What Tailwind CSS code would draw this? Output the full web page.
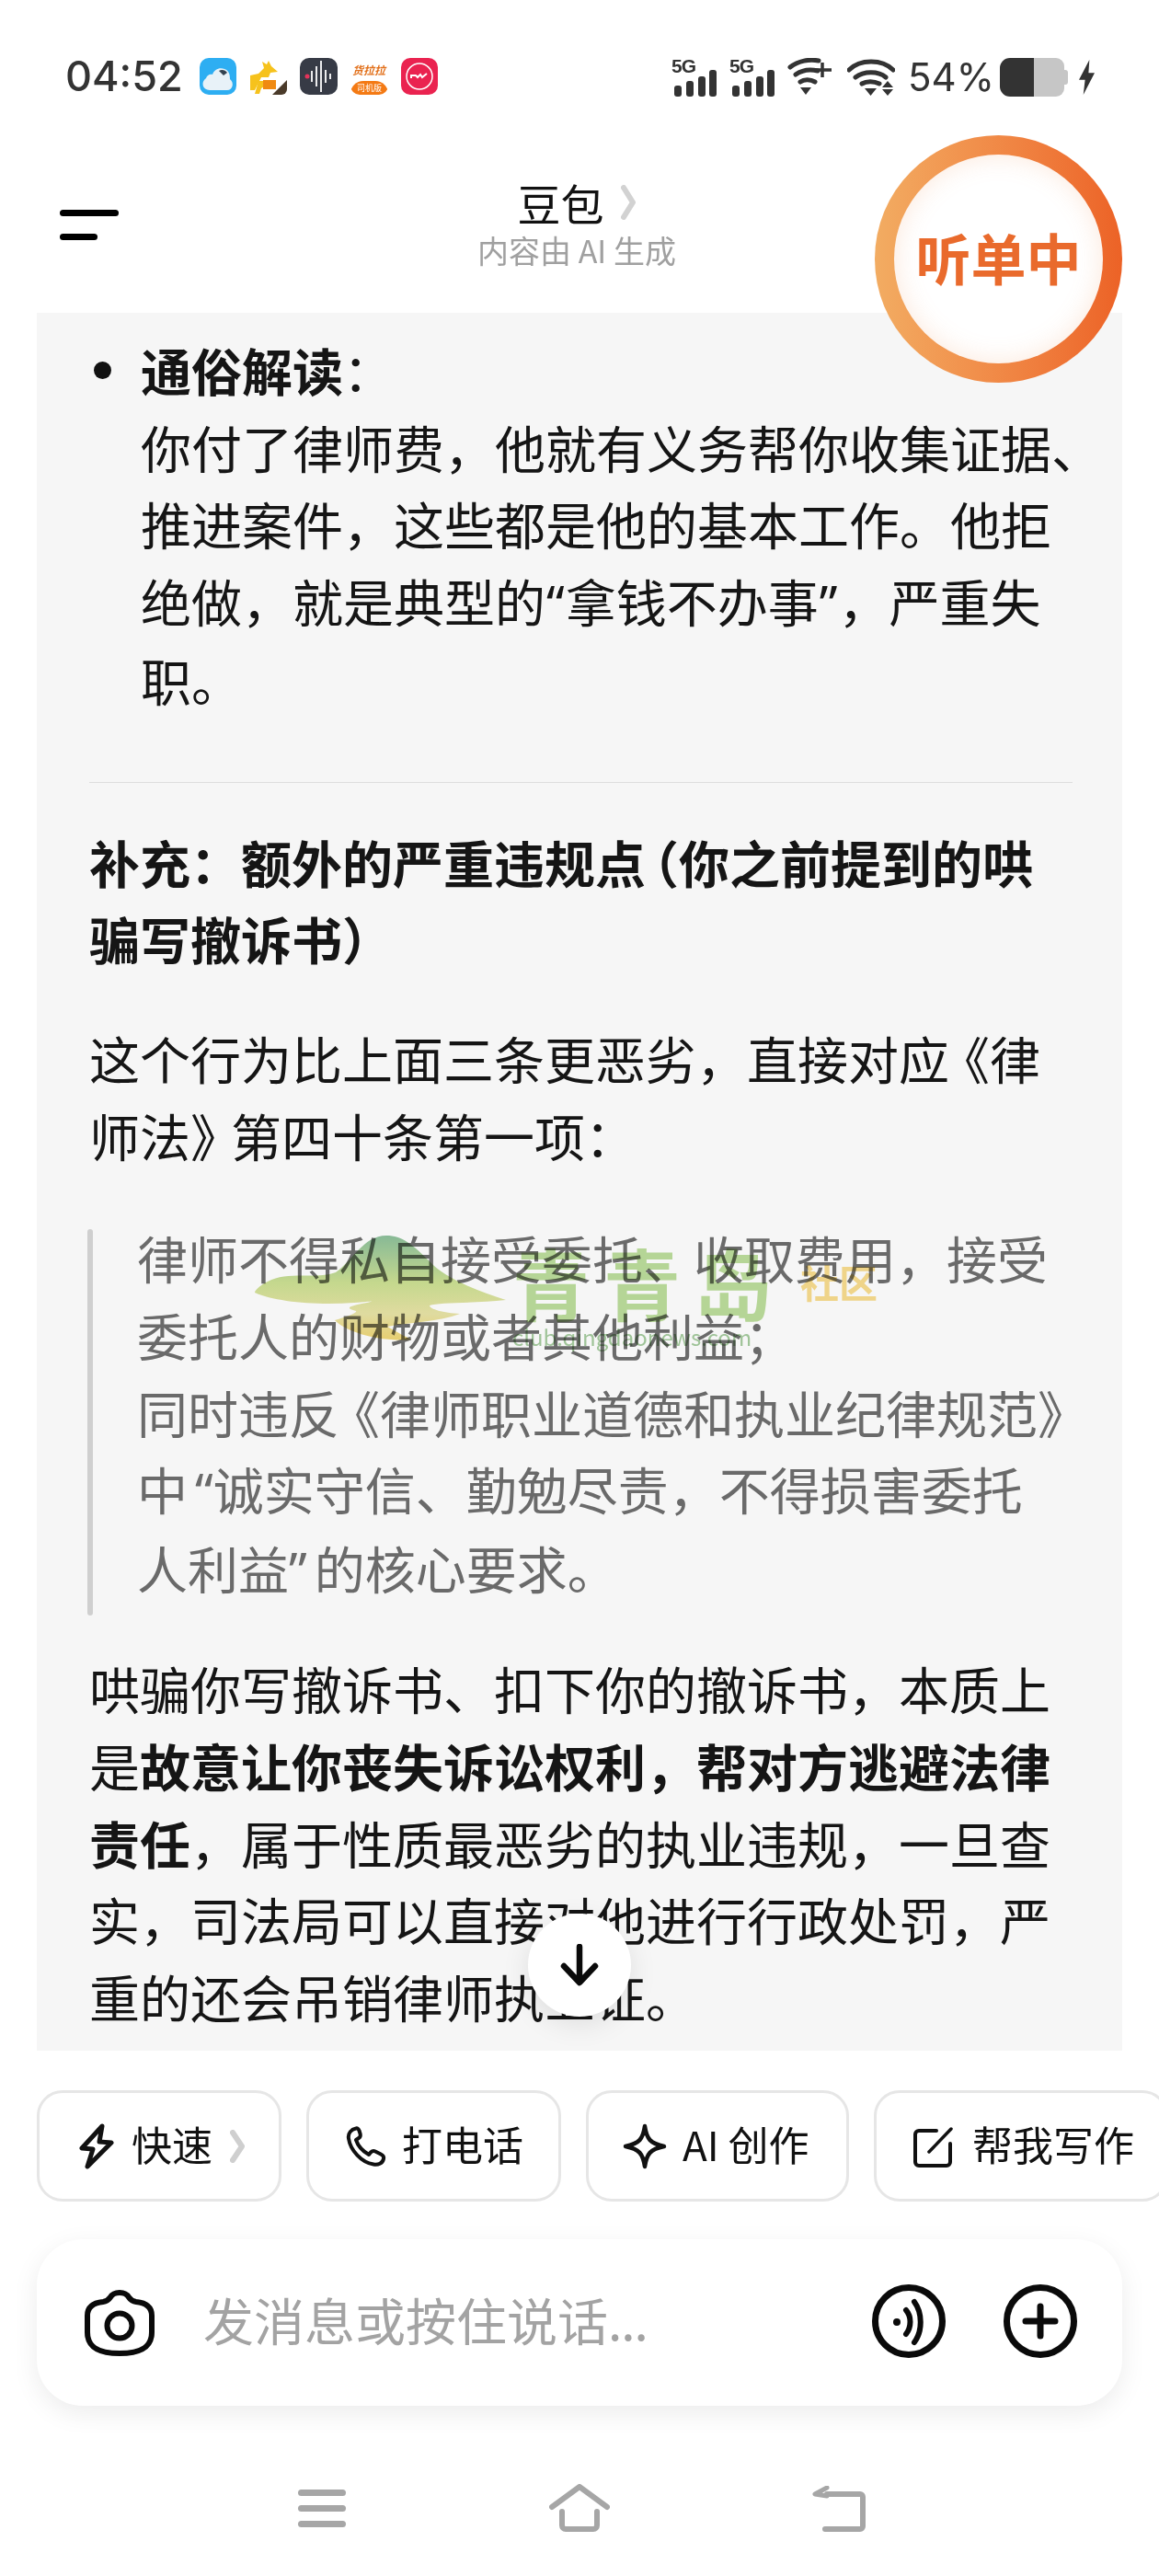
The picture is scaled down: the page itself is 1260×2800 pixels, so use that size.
<!DOCTYPE html>
<html>
  <head>
    <meta charset="UTF-8" />
    <meta name="viewport" content="width=device-width, initial-scale=1.0" />
    <script src="https://cdn.jsdelivr.net/npm/@tailwindcss/browser@4"></script>
  </head>
  <body>
    <div class="relative w-[1260px] h-[2800px] overflow-hidden bg-white font-['Noto_Sans_CJK_SC','Noto_Sans',sans-serif] text-[#151515]">
      <!-- status bar -->
      <div class="h-[166px] pt-[63px] pl-[71px] pr-[70px] flex justify-between items-start">
        <div class="flex items-center h-[40px]">
          <span class="font-['Inter',sans-serif] font-medium text-[45px] leading-[40px] w-[146px] text-[#333333]">04:52</span>
          <div class="flex gap-[14px]">
            <svg class="w-[40px] h-[40px]" viewBox="0 0 40 40">
              <rect width="40" height="40" rx="10" fill="#2eaef2" />
              <path d="M11 35C3 35 1 26 7 22c1-3 4-5 7-4 2-6 8-8 13-6 5 2 6 6 6 11 5 4 3 12-3 12z" fill="#e8f2f8" />
              <path d="M21 14c3-2 7-1 9 2l-4 3z" fill="#33424f" />
            </svg>
            <svg class="w-[41px] h-[40px]" viewBox="0 0 41 40">
              <rect width="41" height="40" rx="10" fill="#ffffff" />
              <path d="M1 19l9-2 6-6-2-7 5 3 2-4 3 6 7 6-8 1-2 5H13l-3 6-4 8H1z" fill="#f6c21c" />
              <path d="M10 25h18l-10 5-5 3-2 6H6z" fill="#f6c21c" />
              <rect x="15" y="24" width="14" height="10" fill="#f08a12" />
              <path d="M25 40l16-16v10a6 6 0 0 1-6 6z" fill="#4a3a2a" />
            </svg>
            <svg class="w-[41px] h-[40px]" viewBox="0 0 41 40">
              <rect width="41" height="40" rx="10" fill="#373b46" />
              <circle cx="8" cy="20" r="2.500" fill="#e2335a" />
              <path d="M13 14v12M18 9v22M23 3v34M28 13v14M33 17v6" stroke="#fff" stroke-width="1.800" />
            </svg>
            <div class="relative w-[41px] h-[40px] rounded-[10px] bg-white overflow-hidden">
              <div class="absolute left-0 right-0 bottom-0 h-[15px] bg-[#f47a14] rounded-t-[14px] flex justify-center text-[9px] leading-[15px] text-white">司机版</div>
              <span class="absolute left-[2px] top-[6px] text-[12px] leading-[14px] font-bold italic text-[#e2711c] whitespace-nowrap">货拉拉</span>
            </div>
            <svg class="w-[40px] h-[40px]" viewBox="0 0 40 40">
              <rect width="40" height="40" rx="10" fill="#ea2350" />
              <circle cx="20" cy="20" r="14" fill="none" stroke="#fff" stroke-width="1.500" />
              <path d="M11 22v-3h5l2 2 3-3 2 3 5-4" fill="none" stroke="#fff" stroke-width="2" />
            </svg>
          </div>
        </div>
        <div class="flex items-center h-[42px]">
          <svg class="w-[50px] h-[42px] mr-[13px] overflow-visible" viewBox="0 0 50 42">
            <text x="0" y="16" font-family="Liberation Sans" font-weight="700" font-size="21" fill="#333" textLength="27">5G</text>
            <rect x="3" y="30" width="8" height="12" rx="3" fill="#333" />
            <rect x="16" y="25" width="8" height="17" rx="3" fill="#333" />
            <rect x="29" y="20" width="8" height="22" rx="3" fill="#333" />
            <rect x="41" y="13" width="8" height="29" rx="3" fill="#333" />
          </svg>
          <svg class="w-[50px] h-[42px] mr-[13px] overflow-visible" viewBox="0 0 50 42">
            <text x="0" y="16" font-family="Liberation Sans" font-weight="700" font-size="21" fill="#333" textLength="27">5G</text>
            <rect x="3" y="30" width="8" height="12" rx="3" fill="#333" />
            <rect x="16" y="25" width="8" height="17" rx="3" fill="#333" />
            <rect x="29" y="20" width="8" height="22" rx="3" fill="#333" />
            <rect x="41" y="13" width="8" height="29" rx="3" fill="#333" />
          </svg>
          <svg class="w-[50px] h-[42px] mr-[15px]" viewBox="0 0 50 42">
            <path d="M3 10C12 3 24 1 34 3M9 18c7-5 16-6 24-4M14 26c4-3 11-3 16 0" fill="none" stroke="#333" stroke-width="5" stroke-linecap="round" />
            <path d="M14 32h12l-6 8z" fill="#333" />
            <path d="M38 5v16M30 13h18" stroke="#333" stroke-width="3.500" />
          </svg>
          <svg class="w-[52px] h-[42px] mr-[14px]" viewBox="0 0 52 42">
            <path d="M2 13C14 1 38 1 50 13M9 21c9-7 25-7 33 0M16 28c5-3 13-3 19 0" fill="none" stroke="#333" stroke-width="5" stroke-linecap="round" />
            <path d="M19 33h13l-6.500 8z" fill="#333" />
            <path d="M44 25l6 7H38zM38 34h12l-6 7z" fill="#333" />
          </svg>
          <span class="font-['Inter',sans-serif] text-[42px] leading-[42px] w-[100px] text-[#333333]">54%</span>
          <div class="flex items-center w-[74px] h-[42px] mr-[12px]">
            <div class="w-[37px] h-[42px] rounded-l-[11px] bg-[#333333]"></div>
            <div class="w-[33px] h-[42px] rounded-r-[9px] bg-[#c6c6c6]"></div>
            <div class="w-[4px] h-[16px] rounded-r-[3px] bg-[#c6c6c6]"></div>
          </div>
          <svg class="w-[17px] h-[38px]" viewBox="0 0 18 40">
            <path d="M12 0L0 23h7L5 40 18 15h-7z" fill="#333" />
          </svg>
        </div>
      </div>

      <!-- title bar -->
      <div class="relative h-[174px] flex flex-col items-center pt-[32px] pr-[6px]">
        <div class="absolute left-[65px] top-[62px] flex flex-col gap-[19px]">
          <div class="w-[64px] h-[7px] rounded-full bg-black"></div>
          <div class="w-[41px] h-[7px] rounded-full bg-black"></div>
        </div>
        <div class="flex items-center h-[44px]">
          <span class="text-[47px] leading-[44px] text-[#111111]">豆包</span>
          <svg class="w-[17px] h-[38px] ml-[18px]" viewBox="0 0 17 38">
            <path d="M3 3l10 16L3 35" fill="none" stroke="#d2d2d2" stroke-width="6" stroke-linecap="round" stroke-linejoin="round" />
          </svg>
        </div>
        <p class="mt-[9px] text-[34px] leading-[42px] text-[#a0a0a0] whitespace-nowrap">内容由 AI 生成</p>
      </div>

      <!-- answer -->
      <div class="relative mx-[40px] h-[1889px] overflow-hidden bg-[#f6f6f6] pt-[20px] pl-[57px] text-[55px] leading-[83.7px] whitespace-nowrap">
        <div class="relative pl-[56px]">
          <span class="absolute left-[5px] top-[33px] w-[19px] h-[19px] rounded-full bg-[#111111]"></span>
          <p><b class="font-bold">通俗解读</b>：<br />你付了律师费，他就有义务帮你收集证据、<br />推进案件，这些都是他的基本工作。他拒<br />绝做，就是典型的<span class="font-['Noto_Sans'] mx-[1px]">“</span>拿钱不办事<span class="font-['Noto_Sans'] mx-[1px]">”</span>，严重失<br />职。</p>
        </div>
        <div class="mt-[69px] mr-[54px] h-[1px] bg-[#dedede]"></div>
        <p class="mt-[44px] font-bold">补充：额外的严重违规点<span class="-ml-[19px]">（</span>你之前提到的哄<br />骗写撤诉书）</p>
        <p class="mt-[46px]">这个行为比上面三条更恶劣，直接对应<span class="-ml-[11px]">《</span>律<br />师法<span class="tracking-[-11px]">》</span>第四十条第一项：</p>
        <div class="mt-[50px] flex text-[#6a6a6a]">
          <div class="mt-[11px] w-[6px] h-[420px] rounded-full bg-[#cfcfcf] -ml-[2px]"></div>
          <p class="ml-[48px]">律师不得私自接受委托、收取费用，接受<br />委托人的财物或者其他利益；<br />同时违反<span class="-ml-[11px]">《</span>律师职业道德和执业纪律规范》<br />中<span class="font-['Noto_Sans'] ml-[8px]">“</span>诚实守信、勤勉尽责，不得损害委托<br />人利益<span class="font-['Noto_Sans'] mr-[8px]">”</span>的核心要求。</p>
        </div>
        <p class="mt-[37px]">哄骗你写撤诉书、扣下你的撤诉书，本质上<br />是<b class="font-bold">故意让你丧失诉讼权利，帮对方逃避法律<br />责任</b>，属于性质最恶劣的执业违规，一旦查<br />实，司法局可以直接对他进行行政处罚，严<br />重的还会吊销律师执业证。</p>
      </div>

      <!-- quick actions -->
      <div class="mt-[43px] pl-[40px] flex gap-[27px] text-[44px] leading-[50px] text-[#111111] whitespace-nowrap">
        <div class="shrink-0 w-[266px] h-[121px] rounded-[28px] border-[3px] border-[#e6e6e6] flex items-center pl-[43px] pb-[6px]">
          <svg class="w-[38px] h-[50px] mt-[6px]" viewBox="0 0 38 50">
            <path d="M25 3L3 27l12 1-6 19 26-26-13-1z" fill="none" stroke="#111" stroke-width="5" stroke-linejoin="round" />
          </svg>
          <span class="ml-[19px]">快速</span>
          <svg class="w-[16px] h-[36px] ml-[19px] mt-[6px]" viewBox="0 0 16 36">
            <path d="M3 3l10 15L3 33" fill="none" stroke="#cfcfcf" stroke-width="6" stroke-linecap="round" stroke-linejoin="round" />
          </svg>
        </div>
        <div class="shrink-0 w-[277px] h-[121px] rounded-[28px] border-[3px] border-[#e6e6e6] flex items-center pl-[40px] pb-[6px]">
          <svg class="w-[44px] h-[44px] mt-[6px]" viewBox="0 0 44 44">
            <path d="M11 2.500c-5 1-9 5-8 11 2 13 14 26 27 28 5 1 10-1 11-6 .5-2-1-4-3-5l-6-3c-2-1-4 0-5 1l-2 2.500C18 27 13 21 11 15l3-2c2-1 2-3 1.500-5l-1-3c-.5-2-2-3-3.500-2.500z" fill="none" stroke="#111" stroke-width="4" stroke-linejoin="round" />
          </svg>
          <span class="ml-[17px]">打电话</span>
        </div>
        <div class="shrink-0 w-[286px] h-[121px] rounded-[28px] border-[3px] border-[#e6e6e6] flex items-center pl-[37px] pb-[6px]">
          <svg class="w-[48px] h-[50px] mt-[6px]" viewBox="0 0 48 50">
            <path d="M24 3c2 14 6 19 21 22-15 3-19 8-21 22-2-14-6-19-21-22 15-3 19-8 21-22z" fill="none" stroke="#111" stroke-width="4.500" stroke-linejoin="round" />
          </svg>
          <span class="ml-[17px]">AI 创作</span>
        </div>
        <div class="shrink-0 w-[320px] h-[121px] rounded-[28px] border-[3px] border-[#e6e6e6] flex items-center pl-[39px] pb-[6px]">
          <svg class="w-[48px] h-[48px] mt-[6px]" viewBox="0 0 48 48">
            <path d="M26 7H7a4 4 0 0 0-4 4v30a4 4 0 0 0 4 4h30a4 4 0 0 0 4-4V21" fill="none" stroke="#111" stroke-width="4" stroke-linecap="round" />
            <path d="M18 30L42 5" fill="none" stroke="#111" stroke-width="3.500" stroke-linecap="round" />
          </svg>
          <span class="ml-[17px]">帮我写作</span>
        </div>
      </div>

      <!-- input -->
      <div class="mt-[41px] mx-[40px] h-[181px] rounded-[50px] bg-white shadow-[0_8px_28px_rgba(0,0,0,0.08)] flex items-center pl-[52px]">
        <svg class="w-[76px] h-[72px]" viewBox="0 0 76 72">
          <path d="M38 3c-5 0-8 1.500-10 5-2 3-4 4.500-8 5C10 14 3 18 3 28v18c0 15 10 23 35 23s35-8 35-23V28c0-10-7-14-17-15-4-.5-6-2-8-5-2-3.500-5-5-10-5z" fill="none" stroke="#0a0a0a" stroke-width="6" />
          <circle cx="38" cy="39" r="13.500" fill="none" stroke="#0a0a0a" stroke-width="6" />
        </svg>
        <span class="ml-[53px] mb-[10px] text-[55px] leading-[60px] text-[#a3a3a3]">发消息或按住说话<span class="tracking-[-1px]">...</span></span>
        <svg class="absolute left-[948px] top-[2483px] w-[80px] h-[80px]" viewBox="0 0 80 80">
          <circle cx="40" cy="40" r="36.500" fill="none" stroke="#0a0a0a" stroke-width="7" />
          <circle cx="27" cy="41" r="4" fill="#0a0a0a" />
          <path d="M37 28c6 7 6 18 0 26" fill="none" stroke="#0a0a0a" stroke-width="6" stroke-linecap="round" />
          <path d="M46 19c9 12 9 32 0 44" fill="none" stroke="#0a0a0a" stroke-width="6" stroke-linecap="round" />
        </svg>
        <svg class="absolute left-[1091px] top-[2483px] w-[80px] h-[80px]" viewBox="0 0 80 80">
          <circle cx="40" cy="40" r="36.500" fill="none" stroke="#0a0a0a" stroke-width="7" />
          <path d="M40 24v32M24 40h32" fill="none" stroke="#0a0a0a" stroke-width="7" stroke-linecap="round" />
        </svg>
      </div>

      <!-- nav -->
      <div class="mt-[89px] pl-[324px] flex items-start">
        <div class="w-[52px] flex flex-col gap-[10px] pt-[2px]">
          <div class="h-[7px] rounded-full bg-[#a6a6a6]"></div>
          <div class="h-[7px] rounded-full bg-[#a6a6a6]"></div>
          <div class="h-[7px] rounded-full bg-[#a6a6a6]"></div>
        </div>
        <svg class="ml-[221px] -mt-[4px] w-[66px] h-[52px]" viewBox="0 0 66 52">
          <path d="M3 25L33 3l30 22M14 30v15a4 4 0 0 0 4 4h30a4 4 0 0 0 4-4V30" fill="none" stroke="#a6a6a6" stroke-width="6" stroke-linecap="round" stroke-linejoin="round" />
        </svg>
        <svg class="ml-[220px] -mt-[2px] w-[58px] h-[50px]" viewBox="0 0 58 50">
          <path d="M16 9h36a3 3 0 0 1 3 3v32a3 3 0 0 1-3 3H14" fill="none" stroke="#a6a6a6" stroke-width="6" stroke-linecap="round" stroke-linejoin="round" />
          <path d="M16 2L3 9l13 2" fill="none" stroke="#a6a6a6" stroke-width="5" stroke-linecap="round" stroke-linejoin="round" />
        </svg>
      </div>

      <!-- listening badge -->
      <div class="absolute left-[951px] top-[147px] w-[269px] h-[269px] rounded-full bg-linear-to-r from-[#f2ac62] to-[#ec6226] p-[21px]">
        <div class="w-full h-full rounded-full bg-white shadow-[inset_0_0_28px_rgba(240,150,90,0.22)] flex items-center justify-center pb-[6px]">
          <span class="text-[60px] leading-[60px] font-bold text-[#e96a2c] whitespace-nowrap">听单中</span>
        </div>
      </div>

      <!-- watermark -->
      <div class="absolute left-[277px] top-[1343px] w-[680px] h-[125px] mix-blend-multiply pointer-events-none">
        <svg class="absolute left-0 top-0 w-[274px] h-[115px]" viewBox="0 0 274 115">
          <defs>
            <linearGradient id="mountain" x1="0" y1="0" x2="0" y2="1">
              <stop offset="0" stop-color="#8cc09c" />
              <stop offset="0.45" stop-color="#cce092" />
              <stop offset="0.75" stop-color="#e8e3a6" />
              <stop offset="1" stop-color="#f0d674" />
            </linearGradient>
          </defs>
          <path d="M143 0C118 0 106 28 88 40C66 48 36 38 14 50C4 55 0 60 0 62C22 72 66 76 108 73C125 72 133 70 122 73C104 76 96 79 110 82C112 84 100 88 87 92C100 106 140 116 170 113C160 108 150 102 144 99C170 94 200 94 223 85C205 84 190 80 190 76C200 72 240 74 273 70C240 60 205 45 190 28C172 10 160 0 143 0Z" fill="url(#mountain)" />
        </svg>
        <span class="absolute left-[280px] top-[0px] text-[84px] leading-[100px] tracking-[15px] font-bold text-[#bcdd9c] whitespace-nowrap">青青岛</span>
        <span class="absolute left-[593px] top-[28px] text-[42px] leading-[44px] font-bold text-[#f8dc8e] whitespace-nowrap">社区</span>
        <span class="absolute left-[280px] top-[96px] text-[24px] leading-[28px] text-[#a5cb9e] whitespace-nowrap">club.qingdaonews.com</span>
      </div>

      <!-- scroll down -->
      <div class="absolute left-[574px] top-[2080px] w-[112px] h-[112px] rounded-full bg-white shadow-[0_8px_30px_rgba(0,0,0,0.1)] flex items-center justify-center">
        <svg class="w-[42px] h-[46px]" viewBox="0 0 42 46">
          <path d="M21 3v38M4 24l17 18 17-18" fill="none" stroke="#0a0a0a" stroke-width="6.500" stroke-linecap="round" stroke-linejoin="round" />
        </svg>
      </div>
    </div>
  </body>
</html>
